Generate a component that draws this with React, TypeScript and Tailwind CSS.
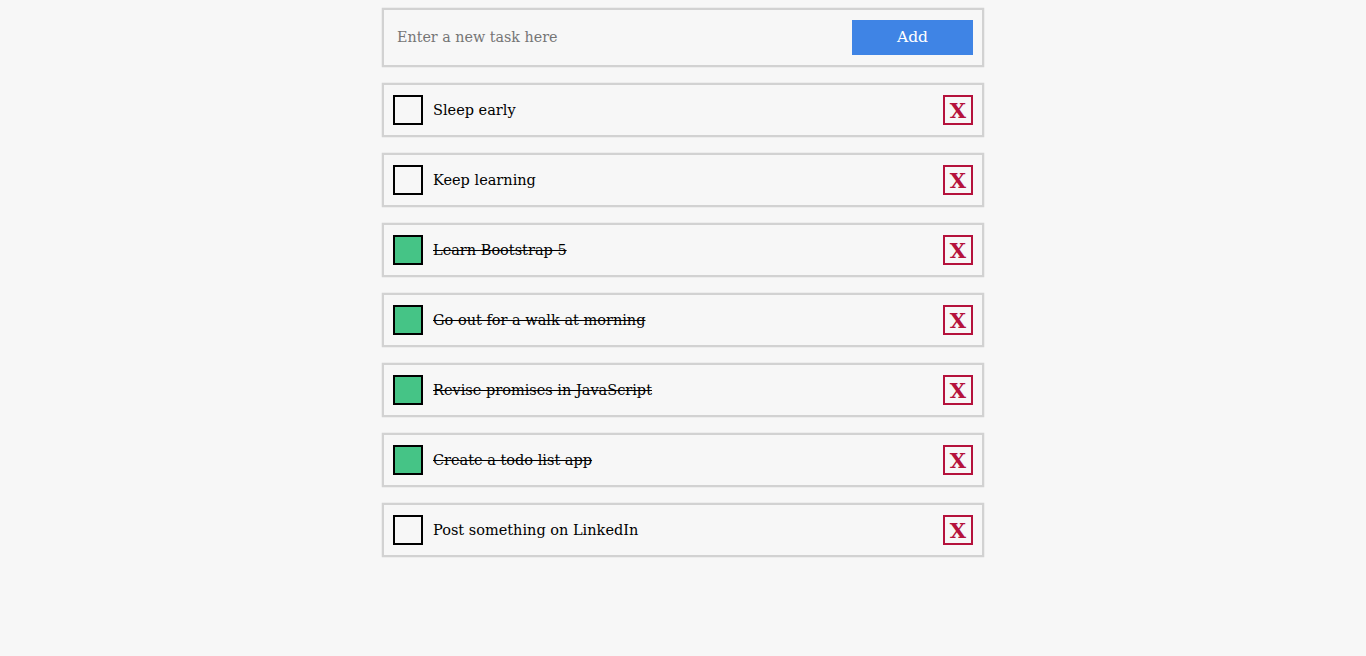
const tasks = [
  { text: 'Sleep early', done: false },
  { text: 'Keep learning', done: false },
  { text: 'Learn Bootstrap 5', done: true },
  { text: 'Go out for a walk at morning', done: true },
  { text: 'Revise promises in JavaScript', done: true },
  { text: 'Create a todo list app', done: true },
  { text: 'Post something on LinkedIn', done: false },
]

export default function App() {
  return (
    <div className="w-screen min-h-screen bg-[#f7f7f7] font-['DejaVu_Serif',serif] text-[14.5px] text-black">
      <div className="w-[602px] mx-auto pt-2 flex flex-col gap-4">
        <div className="flex items-center justify-between border-2 border-[#d2d2d2] shadow-[0_0_1px_#bbb] bg-[#f7f7f7] pl-[13px] pr-[9px] py-[10px]">
          <input
            className="flex-1 bg-transparent outline-none placeholder:text-[#757575] text-[14.3px]"
            placeholder="Enter a new task here"
          />
          <button className="w-[121px] h-[35px] bg-[#3f84e5] text-white text-[15.5px]">Add</button>
        </div>
        {tasks.map((t) => (
          <div
            key={t.text}
            className="flex items-center border-2 border-[#d2d2d2] shadow-[0_0_1px_#bbb] bg-[#f7f7f7] pl-[9px] pr-[9px] py-[10px]"
          >
            <span
              className={
                t.done
                  ? 'w-[30px] h-[30px] border-2 border-black bg-[#45c486]'
                  : 'w-[30px] h-[30px] border-2 border-black bg-[#f7f7f7]'
              }
            />
            <span className={t.done ? 'ml-[10px] pt-px flex-1 line-through' : 'ml-[10px] pt-px flex-1'}>
              {t.text}
            </span>
            <span className="w-[30px] h-[30px] border-2 border-[#b5123c] flex items-center justify-center text-[#b5123c] font-bold text-[21px] leading-none">
              X
            </span>
          </div>
        ))}
      </div>
    </div>
  )
}
